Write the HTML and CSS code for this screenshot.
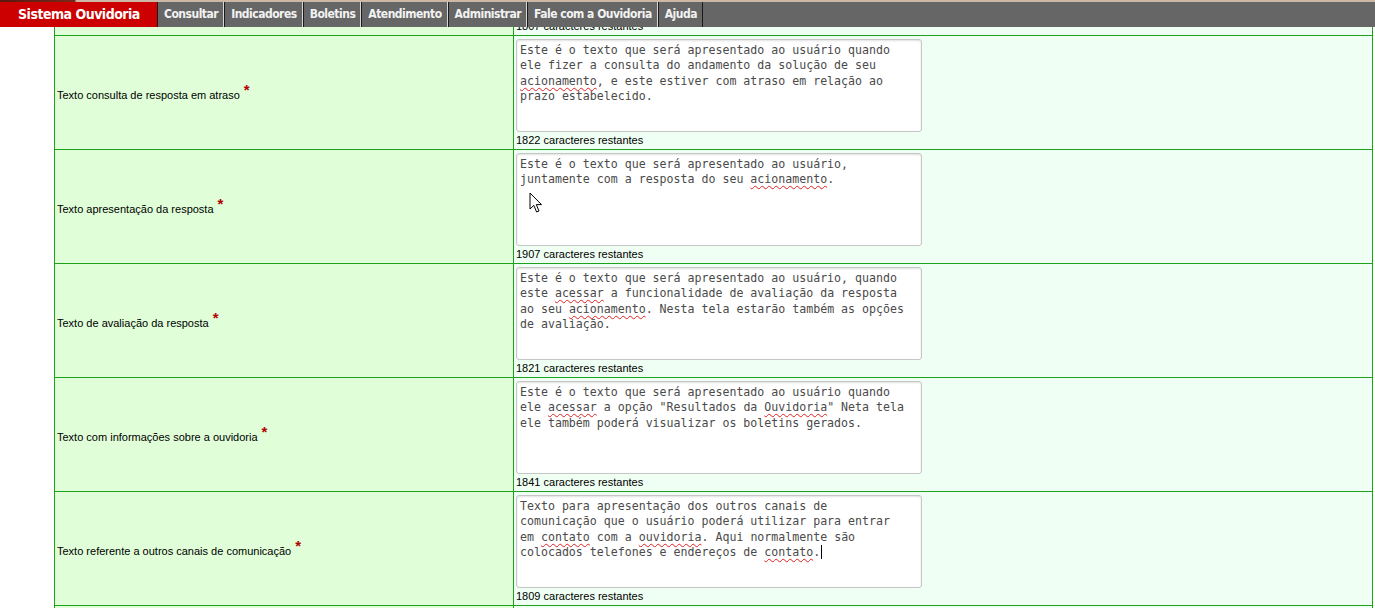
FILE: index.html
```html
<!DOCTYPE html>
<html lang="pt-BR">
<head>
<meta charset="utf-8">
<title>Sistema Ouvidoria</title>
<link rel="stylesheet" href="styles.css">
</head>
<body>
<div class="topstrip"></div>
<nav class="navbar">
  <div class="brand">Sistema Ouvidoria</div>
  <ul class="menu">
    <li>Consultar</li>
    <li>Indicadores</li>
    <li>Boletins</li>
    <li>Atendimento</li>
    <li>Administrar</li>
    <li>Fale com a Ouvidoria</li>
    <li>Ajuda</li>
  </ul>
</nav>
<div class="viewport">
  <div class="form">
    <div class="row">
      <div class="label">Texto de abertura do acionamento <span class="req">*</span></div>
      <div class="value">
        <div class="textarea">Este é o texto que será apresentado ao usuário no momento da abertura do seu acionamento.</div>
        <div class="count">1807 caracteres restantes</div>
      </div>
    </div>
    <div class="row">
      <div class="label">Texto consulta de resposta em atraso <span class="req">*</span></div>
      <div class="value">
        <div class="textarea">Este é o texto que será apresentado ao usuário quando ele fizer a consulta do andamento da solução de seu <span class="sp">acionamento</span>, e este estiver com atraso em relação ao prazo estabelecido.</div>
        <div class="count">1822 caracteres restantes</div>
      </div>
    </div>
    <div class="row">
      <div class="label">Texto apresentação da resposta <span class="req">*</span></div>
      <div class="value cursor-host">
        <div class="textarea">Este é o texto que será apresentado ao usuário, juntamente com a resposta do seu <span class="sp">acionamento</span>.</div>
        <div class="count">1907 caracteres restantes</div>
        <svg class="pointer" width="14" height="22" viewBox="0 0 14 22"><path d="M1 1 L1 17 L4.8 13.4 L7.6 20 L10 19 L7.3 12.6 L12.5 12.6 Z" fill="#fff" stroke="#000" stroke-width="1" stroke-linejoin="round"/></svg>
      </div>
    </div>
    <div class="row">
      <div class="label">Texto de avaliação da resposta <span class="req">*</span></div>
      <div class="value">
        <div class="textarea">Este é o texto que será apresentado ao usuário, quando este <span class="sp">acessar</span> a funcionalidade de avaliação da resposta ao seu <span class="sp">acionamento</span>. Nesta tela estarão também as opções de avaliação.</div>
        <div class="count">1821 caracteres restantes</div>
      </div>
    </div>
    <div class="row">
      <div class="label">Texto com informações sobre a ouvidoria <span class="req">*</span></div>
      <div class="value">
        <div class="textarea">Este é o texto que será apresentado ao usuário quando ele <span class="sp">acessar</span> a opção "Resultados da <span class="sp">Ouvidoria</span>" Neta tela ele também poderá visualizar os boletins gerados.</div>
        <div class="count">1841 caracteres restantes</div>
      </div>
    </div>
    <div class="row">
      <div class="label">Texto referente a outros canais de comunicação <span class="req">*</span></div>
      <div class="value">
        <div class="textarea">Texto para apresentação dos outros canais de comunicação que o usuário poderá utilizar para entrar em <span class="sp">contato</span> com a <span class="sp">ouvidoria</span>. Aqui normalmente são colocados telefones e endereços de <span class="sp">contato</span>.<span class="caret"></span></div>
        <div class="count">1809 caracteres restantes</div>
      </div>
    </div>
    <div class="row">
      <div class="label">Texto de encerramento <span class="req">*</span></div>
      <div class="value">
        <div class="textarea">Texto apresentado ao usuário no encerramento do acionamento.</div>
        <div class="count">1940 caracteres restantes</div>
      </div>
    </div>
  </div>
</div>
</body>
</html>
```

FILE: styles.css
```css
html, body {
  margin: 0;
  padding: 0;
  background: #ffffff;
  overflow: hidden;
}
body {
  font-family: "Liberation Sans", Arial, sans-serif;
  font-size: 11px;
  color: #000;
}
.topstrip {
  height: 2px;
  background: linear-gradient(to right, #5a1810 0, #7a2a1a 75px, #cdb8a6 76px, #cdb8a6 100%);
}
.navbar {
  display: flex;
  height: 25px;
  background: #666666;
  font-family: "Liberation Sans Narrow", "Arial Narrow", "DejaVu Sans Condensed", sans-serif;
  font-stretch: condensed;
  font-weight: bold;
}
.brand {
  width: 157px;
  background: #cc0000;
  color: #ffffff;
  font-size: 14px;
  letter-spacing: -0.5px;
  line-height: 25px;
  padding-left: 18px;
  box-sizing: border-box;
  white-space: nowrap;
}
.menu {
  display: flex;
  margin: 0;
  padding: 0;
  list-style: none;
}
.menu li {
  color: #f2f2f2;
  font-size: 12px;
  letter-spacing: -0.5px;
  line-height: 25px;
  padding: 0 5px 0 6px;
  border-left: 1px solid #1a1a1a;
  border-right: 1px solid #d8d8d8;
  white-space: nowrap;
}
.menu li:last-child {
  border-right-color: #1a1a1a;
}
.viewport {
  height: 581px;
  overflow: hidden;
}
.form {
  margin: -105px 0 0 54px;
  width: 1319px;
  box-sizing: border-box;
  border-left: 1px solid #1ea21e;
  border-right: 1px solid #1ea21e;
}
.row {
  display: grid;
  grid-template-columns: 459px 1fr;
  height: 114px;
  box-sizing: border-box;
  border-bottom: 1px solid #1ea21e;
}
.label {
  display: flex;
  align-items: center;
  padding: 5px 0 0 2px;
  background: #e0ffd9;
  border-right: 1px solid #1ea21e;
  white-space: nowrap;
}
.req {
  color: #b30000;
  font-weight: bold;
  font-size: 15px;
  margin-left: 4px;
  position: relative;
  top: -6px;
}
.value {
  background: #f0fff3;
  padding: 3px 2px 0;
}
.cursor-host {
  position: relative;
}
.textarea {
  width: 406px;
  height: 93px;
  box-sizing: border-box;
  background: #ffffff;
  border: 1px solid #c6c6c6;
  border-radius: 3px;
  box-shadow: inset 0 1px 2px rgba(0,0,0,0.12);
  padding: 3px 13px 3px 3px;
  font-family: "DejaVu Sans Mono", monospace;
  font-size: 11.6px;
  line-height: 15.3px;
  color: #4a4a4a;
  overflow: hidden;
}
.sp {
  text-decoration: underline wavy #e02020;
  text-decoration-thickness: 1px;
  text-underline-offset: 2px;
}
.caret {
  display: inline-block;
  width: 1px;
  height: 14px;
  background: #000;
  vertical-align: -3px;
  margin-left: 1px;
}
.count {
  line-height: 15px;
  margin-top: 1px;
}
.pointer {
  position: absolute;
  left: 15px;
  top: 42px;
}
```
